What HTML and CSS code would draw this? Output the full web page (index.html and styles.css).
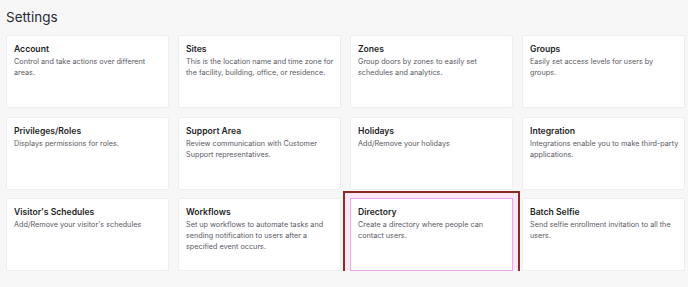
FILE: index.html
```html
<!DOCTYPE html>
<html lang="en">
<head>
  <meta charset="UTF-8">
  <title>Settings</title>
  <meta name="viewport" content="width=device-width, initial-scale=1.0">
  <link rel="stylesheet" href="styles.css">
</head>
<body>
  <div class="page">
    <h1>Settings</h1>

    <div class="grid">
      <div class="card">
        <h2>Account</h2>
        <p>Control and take actions over different areas.</p>
      </div>
      <div class="card">
        <h2>Sites</h2>
        <p>This is the location name and time zone for the facility, building, office, or residence.</p>
      </div>
      <div class="card">
        <h2>Zones</h2>
        <p>Group doors by zones to easily set schedules and analytics.</p>
      </div>
      <div class="card">
        <h2>Groups</h2>
        <p>Easily set access levels for users by groups.</p>
      </div>

      <div class="card">
        <h2>Privileges/Roles</h2>
        <p>Displays permissions for roles.</p>
      </div>
      <div class="card">
        <h2>Support Area</h2>
        <p>Review communication with Customer Support representatives.</p>
      </div>
      <div class="card">
        <h2>Holidays</h2>
        <p>Add/Remove your holidays</p>
      </div>
      <div class="card">
        <h2>Integration</h2>
        <p>Integrations enable you to make third-party applications.</p>
      </div>

      <div class="card">
        <h2>Visitor's Schedules</h2>
        <p>Add/Remove your visitor's schedules</p>
      </div>
      <div class="card">
        <h2>Workflows</h2>
        <p>Set up workflows to automate tasks and sending notification to users after a specified event occurs.</p>
      </div>
      <div class="card card-highlight">
        <h2>Directory</h2>
        <p>Create a directory where people can contact users.</p>
      </div>
      <div class="card">
        <h2>Batch Selfie</h2>
        <p>Send selfie enrollment invitation to all the users.</p>
      </div>
    </div>
  </div>
</body>
</html>
```

FILE: styles.css
```css
:root {
  --bg: #f7f7f8;
  --card-bg: #ffffff;
  --card-border: #eeeef0;
  --title: #1d1d26;
  --text: #5a5a64;
  --mark-red: #8e2b20;
  --mark-pink: #fde6f6;
  --mark-border: #e7a8e6;
}

* {
  box-sizing: border-box;
}

body {
  margin: 0;
  padding: 0;
  font-family: Inter, 'Liberation Sans', sans-serif;
  background-color: var(--bg);
  color: var(--title);
}

.page {
  padding: 9px 3px 0 6px;
}

h1 {
  margin: 0 0 9px;
  font-size: 13.5px;
  line-height: 17px;
  font-weight: 400;
  color: #2a2a33;
}

.grid {
  display: grid;
  grid-template-columns: repeat(4, 163px);
  grid-auto-rows: 73px;
  column-gap: 9px;
  row-gap: 8.5px;
}

.card {
  background: var(--card-bg);
  border: 1px solid var(--card-border);
  border-radius: 2px;
  padding: 8px 3px 0 7px;
}

.card h2 {
  margin: 0;
  font-size: 8.6px;
  line-height: 11px;
  font-weight: 600;
  color: var(--title);
}

.card p {
  margin: 1px 0 0;
  font-size: 7.25px;
  line-height: 11px;
  color: var(--text);
}

.card-highlight {
  border-radius: 0;
  border-color: var(--mark-border);
  box-shadow: 0 0 0 5px var(--mark-pink), 0 0 0 7px var(--mark-red);
}
```
